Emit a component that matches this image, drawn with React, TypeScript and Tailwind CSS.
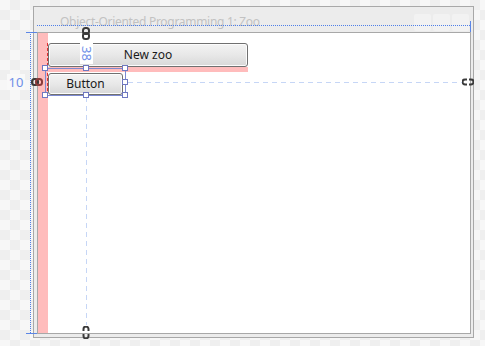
import React from "react";

// Small chain-link glyphs the WPF designer draws on the margin lines
function LinkV({ broken = false }: { broken?: boolean }) {
  return (
    <svg width="8" height="13" viewBox="0 0 8 13">
      {broken ? (
        <g fill="none" stroke="#3a3a3a" strokeWidth="2">
          <path d="M1.5 5 V3 a2.5 2.5 0 0 1 5 0 V5" />
          <path d="M1.5 8 V10 a2.5 2.5 0 0 0 5 0 V8" />
        </g>
      ) : (
        <g fill="none" stroke="#3a3a3a" strokeWidth="2">
          <rect x="1" y="1" width="6" height="6" rx="2.5" />
          <rect x="1" y="6" width="6" height="6" rx="2.5" />
        </g>
      )}
    </svg>
  );
}

function LinkH({ broken = false }: { broken?: boolean }) {
  return (
    <svg width="12" height="8" viewBox="0 0 12 8">
      {broken ? (
        <g fill="none" stroke="#3a3a3a" strokeWidth="2">
          <path d="M5 1.5 H3 a2.5 2.5 0 0 0 0 5 H5" />
          <path d="M7 1.5 H9 a2.5 2.5 0 0 1 0 5 H7" />
        </g>
      ) : (
        <g fill="none" strokeWidth="2">
          <rect x="1" y="1" width="6" height="6" rx="2.5" stroke="#3a3a3a" />
          <rect x="5" y="1" width="6" height="6" rx="2.5" stroke="#8a3a3a" />
        </g>
      )}
    </svg>
  );
}

function Handle({ x, y }: { x: number; y: number }) {
  return (
    <div
      className="absolute h-[6px] w-[6px] border border-[#6f78c0] bg-white"
      style={{ left: x - 3, top: y - 3 }}
    />
  );
}

const wpfButton =
  "flex items-center justify-center rounded-[3px] border border-[#707070] bg-gradient-to-b from-[#f3f3f3] via-[#e8e8e8] to-[#d8d8d8] text-[12px] text-[#1a1a1a] shadow-[inset_0_0_0_1px_#fcfcfc]";

export default function App() {
  const handles = [
    [45, 68], [86, 68], [125, 68],
    [125, 82],
    [45, 95], [86, 95], [125, 95],
  ];

  return (
    <div
      className="relative h-[346px] w-[485px] overflow-hidden bg-[repeating-conic-gradient(#efefef_0_25%,#f7f7f7_0_50%)] bg-[length:20px_20px] pl-[33px] pt-[6px]"
      style={{ fontFamily: '"Noto Sans", "Open Sans", sans-serif' }}
    >
      {/* Window */}
      <div className="flex h-[332px] w-[441px] flex-col border border-[#a8a8a8] bg-[#ececec]">
        {/* Title bar */}
        <div className="flex h-[25px] items-center justify-between pl-[26px] pr-[4px]">
          <span className="pt-[5px] text-[12px] tracking-[-0.3px] text-[#c2c2c2]">Object-Oriented Programming 1: Zoo</span>
          <div className="flex gap-[2px] pt-[6px]">
            <div className="h-[17px] w-[17px] rounded-[2px] bg-[#f2f2f2]" />
            <div className="h-[17px] w-[17px] rounded-[2px] bg-[#f2f2f2]" />
            <div className="h-[17px] w-[17px] rounded-[2px] bg-[#f2f2f2]" />
          </div>
        </div>

        {/* Client area */}
        <div className="mb-[3px] ml-[3px] mr-[2px] flex flex-1 border border-[#a8a8a8] bg-white">
          <div className="w-[10px] bg-[#ffbcbc]" />
          <div className="flex flex-col pt-[10px]">
            <div className={`${wpfButton} h-[24px] w-[200px]`}>New zoo</div>
            <div className="h-[5px] w-[200px] bg-[#ffbcbc]" />
            <div className={`${wpfButton} mt-[1px] h-[22px] w-[75px] text-[12.5px]`}>Button</div>
          </div>
        </div>
      </div>

      {/* Designer adorners: rulers */}
      <div className="absolute left-[37px] top-[25px] h-px w-[434px] bg-[repeating-linear-gradient(90deg,#4f7fe8_0_1px,transparent_1px_2px)]" />
      <div className="absolute left-[470px] top-[21px] h-[11px] w-px bg-[#5b86e6]" />
      <div className="absolute left-[30px] top-[32px] h-[302px] w-px bg-[repeating-linear-gradient(180deg,#4f7fe8_0_1px,transparent_1px_2px)]" />
      <div className="absolute left-[26px] top-[32px] h-px w-[11px] bg-[#5b86e6]" />
      <div className="absolute left-[26px] top-[333px] h-px w-[11px] bg-[#5b86e6]" />

      {/* margin guides */}
      <div className="absolute left-[128px] top-[82px] h-px w-[334px] bg-[repeating-linear-gradient(90deg,#c6d6f6_0_5px,transparent_5px_9px)]" />
      <div className="absolute left-[86px] top-[97px] h-[228px] w-px bg-[repeating-linear-gradient(180deg,#c6d6f6_0_5px,transparent_5px_9px)]" />
      <div className="absolute left-[47px] top-[43px] h-[50px] w-px bg-[repeating-linear-gradient(180deg,#e03030_0_3px,transparent_3px_5px)]" />

      {/* selection */}
      <div className="absolute left-[45px] top-[68px] h-[28px] w-[81px] border border-[#7d8ad2]" />
      {handles.map(([x, y]) => (
        <Handle key={`${x}-${y}`} x={x} y={y} />
      ))}

      {/* margin labels */}
      <div className="absolute left-[80px] top-[42px] flex h-[22px] w-[13px] items-center justify-center bg-white">
        <span className="rotate-90 text-[13px] leading-none text-[#6f8fe8]">38</span>
      </div>
      <div className="absolute left-[7px] top-[74px] flex h-[16px] w-[18px] items-center justify-center bg-[#f9f9f9] text-[13px] leading-none text-[#6f8fe8]">
        10
      </div>

      {/* anchors */}
      <div className="absolute left-[82px] top-[27px]"><LinkV /></div>
      <div className="absolute left-[31px] top-[78px]"><LinkH /></div>
      <div className="absolute left-[462px] top-[78px]"><LinkH broken /></div>
      <div className="absolute left-[82px] top-[326px]"><LinkV broken /></div>
    </div>
  );
}
